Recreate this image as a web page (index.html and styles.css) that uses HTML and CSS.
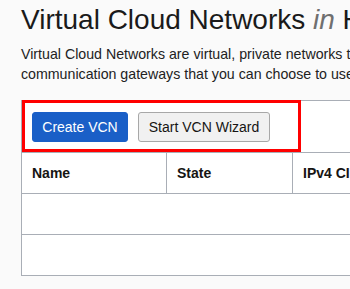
FILE: index.html
```html
<!DOCTYPE html>
<html lang="en">
<head>
<meta charset="utf-8">
<title>Virtual Cloud Networks</title>
<link rel="stylesheet" href="styles.css">
</head>
<body>
<main class="page">
  <h1 class="title">Virtual Cloud Networks <em class="title-in">in</em> Hotel</h1>
  <p class="desc">Virtual Cloud Networks are virtual, private networks that you set up in Oracle data centers, with firewall rules and specific types of<br>communication gateways that you can choose to use.</p>
  <section class="panel">
    <div class="toolbar">
      <button class="btn btn-primary" type="button">Create VCN</button>
      <button class="btn btn-secondary" type="button">Start VCN Wizard</button>
    </div>
    <div class="highlight"></div>
    <table class="grid">
      <thead>
        <tr>
          <th class="col-name">Name</th>
          <th class="col-state">State</th>
          <th class="col-cidr">IPv4 CIDR Block</th>
        </tr>
      </thead>
      <tbody>
        <tr><td></td><td></td><td></td></tr>
        <tr><td></td><td></td><td></td></tr>
      </tbody>
    </table>
  </section>
</main>
</body>
</html>
```
FILE: styles.css
```css
html, body {
  margin: 0;
  padding: 0;
}
body {
  background: #fafafa;
  font-family: "Liberation Sans", Arial, sans-serif;
  color: #161513;
  overflow: hidden;
  width: 350px;
  height: 289px;
}
.page {
  padding-left: 21px;
  width: 900px;
}
.title {
  margin: 4px 0 0;
  font-size: 28px;
  line-height: 32px;
  font-weight: normal;
  white-space: nowrap;
  color: #1a1a1a;
}
.title-in {
  color: #6f6f6f;
  font-style: italic;
}
.desc {
  margin: 8px 0 0;
  font-size: 14.2px;
  line-height: 20px;
  white-space: nowrap;
  color: #222;
}
.panel {
  position: relative;
  margin-top: 16px;
  width: 560px;
  background: #fff;
  border: 1px solid #a9aeb6;
}
.toolbar {
  display: flex;
  gap: 10px;
  padding: 11px 10px 10px;
}
.btn {
  height: 30px;
  margin: 0;
  border-radius: 3px;
  font-family: "Liberation Sans", Arial, sans-serif;
  font-size: 14px;
  line-height: 28px;
  padding: 0;
  box-sizing: border-box;
}
.btn-primary {
  width: 96px;
  background: #1a5fc7;
  border: 1px solid #1a5fc7;
  color: #fff;
}
.btn-secondary {
  width: 132px;
  background: #f1f1f1;
  border: 1px solid #a8a8a8;
  color: #161513;
}
.highlight {
  position: absolute;
  left: 0;
  top: -1px;
  width: 279px;
  height: 52px;
  box-sizing: border-box;
  border: 3px solid #ff0000;
}
.grid {
  width: 100%;
  border-collapse: collapse;
  table-layout: fixed;
}
.grid th {
  height: 40px;
  padding: 0 10px;
  text-align: left;
  font-size: 14px;
  font-weight: bold;
  border-top: 1px solid #a9aeb6;
  border-bottom: 1px solid #a9aeb6;
  border-left: 1px solid #a9aeb6;
  white-space: nowrap;
  overflow: hidden;
}
.grid th:first-child {
  border-left: none;
}
.col-name { width: 124px; }
.col-state { width: 105px; }
.grid td {
  height: 40px;
  padding: 0;
  border-bottom: 1px solid #a9aeb6;
}
.grid tbody tr:last-child td {
  border-bottom: none;
}
```
